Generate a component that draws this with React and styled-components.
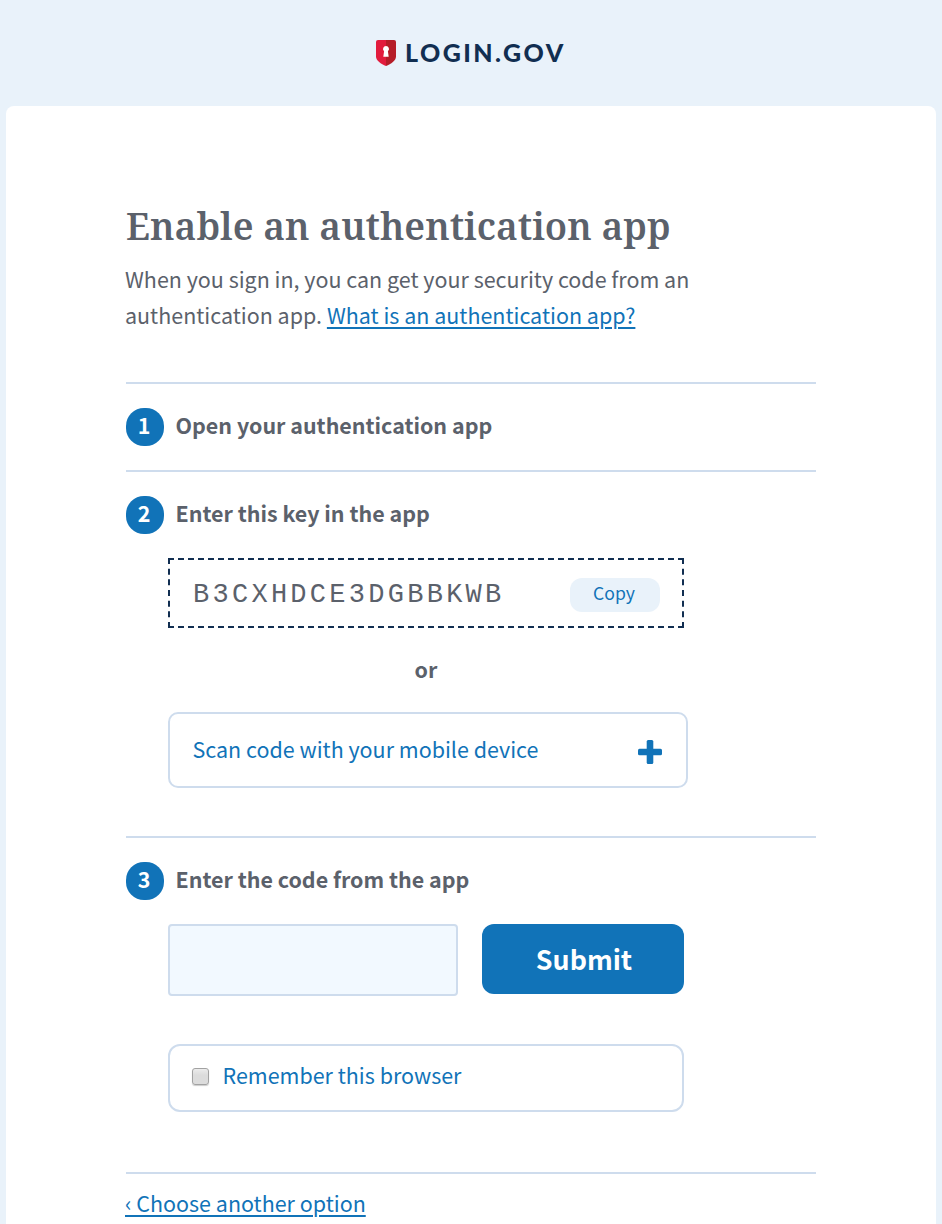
import React from "react";
import styled, { createGlobalStyle } from "styled-components";

const blue = "#1173b8";
const navy = "#112e51";
const gray = "#5b616b";
const rule = "#cedced";
const pale = "#e9f2fa";
const sans = '"Noto Sans CJK SC", "Open Sans", sans-serif';

const GlobalStyle = createGlobalStyle`
  *, *::before, *::after { box-sizing: border-box; }
  html, body { margin: 0; padding: 0; }
  body {
    background: ${pale};
    color: ${gray};
    font: 400 21.48px/36px ${sans};
  }
`;

const Page = styled.div`
  height: 1224px;
  display: flex;
  flex-direction: column;
  overflow: hidden;
`;

const Header = styled.header`
  flex: none;
  height: 106px;
  padding: 40px 0 0 376px;
  display: flex;
  align-items: flex-start;
`;

const Shield = styled.svg`
  display: block;
  width: 20px;
  height: 26px;
  margin-right: 9px;
`;

const Wordmark = styled.span`
  font: 900 25px/24px Lato, sans-serif;
  letter-spacing: 2.45px;
  color: ${navy};
`;

const Card = styled.main`
  flex: 1;
  margin: 0 6px;
  padding: 93px 120px 0;
  background: #fff;
  border-radius: 8px 8px 0 0;
`;

const Title = styled.h1`
  margin: 0;
  height: 62px;
  font: 600 37.3px/54px "Noto Serif", "DejaVu Serif Condensed", serif;
  white-space: nowrap;
`;

const Intro = styled.p`
  margin: 0 0 0 -1px;
  height: 121px;
  white-space: nowrap;
`;

const Link = styled.a`
  color: ${blue};
  text-decoration: underline;
  text-decoration-thickness: 2px;
  text-underline-offset: 3px;
`;

const Section = styled.section`
  height: ${(p) => p.$height}px;
  padding-top: 24px;
  border-top: 2px solid ${rule};
`;

const StepHead = styled.h2`
  margin: 0 0 24px;
  display: flex;
  gap: 11.5px;
  height: 38px;
  font: 700 21.45px/33px ${sans};
`;

const StepNumber = styled.span`
  width: 38px;
  height: 38px;
  padding-right: 2px;
  border-radius: 18px;
  background: ${blue};
  color: #fff;
  text-align: center;
`;

const StepBody = styled.div`
  margin-left: 42px;
  width: 516px;
`;

const KeyBox = styled.div`
  display: flex;
  align-items: center;
  justify-content: space-between;
  height: 70px;
  padding: 2px 22px 0 23px;
  border: 2px dashed ${navy};
`;

const Key = styled.code`
  padding-top: 2px;
  font: 400 27px/36px "Liberation Mono", monospace;
  letter-spacing: 3.27px;
`;

const CopyButton = styled.button`
  width: 90px;
  height: 34px;
  margin-top: 2px;
  padding: 0 2px 4px 0;
  border: 0;
  border-radius: 12px;
  background: ${pale};
  color: ${blue};
  font: 400 17.6px/30px ${sans};
`;

const Or = styled.div`
  height: 84px;
  font-weight: 700;
  line-height: 82px;
  text-align: center;
`;

const ScanRow = styled.div`
  display: flex;
  align-items: center;
  justify-content: space-between;
  width: 520px;
  height: 76px;
  padding: 0 24px 2px 22.5px;
  border: 2px solid ${rule};
  border-radius: 10px;
  color: ${blue};
`;

const Plus = styled.svg`
  display: block;
  width: 24px;
  height: 24px;
  margin-top: 5px;
`;

const CodeRow = styled.div`
  display: flex;
  gap: 24px;
  height: 120px;
`;

const CodeInput = styled.input`
  width: 290px;
  height: 72px;
  padding: 0 16px;
  border: 2px solid ${rule};
  border-radius: 4px;
  background: #f2f9ff;
  font: inherit;
`;

const Submit = styled.button`
  width: 202px;
  height: 70px;
  padding: 0 0 0 2px;
  border: 0;
  border-radius: 12px;
  background: ${blue};
  color: #fff;
  font: 700 26.8px/70px ${sans};
`;

const Remember = styled.label`
  display: flex;
  align-items: center;
  gap: 13.5px;
  height: 68px;
  padding: 0 22px 6px;
  border: 2px solid ${rule};
  border-radius: 12px;
  color: ${blue};
`;

const Checkbox = styled.input`
  appearance: none;
  width: 17px;
  height: 17px;
  margin: 2px 0 0;
  border: 1px solid #a2a2a2;
  border-radius: 3px;
  background: linear-gradient(#ececec, #dcdcdc 40%);
  box-shadow: 0 1px 1px rgba(0, 0, 0, 0.2);
`;

const Footer = styled.footer`
  height: 60px;
  padding-top: 11px;
  border-top: 2px solid ${rule};
`;

const FooterLink = styled(Link)`
  margin-left: -1px;
`;

function Step({ number, title, height, children }) {
  return (
    <Section $height={height}>
      <StepHead>
        <StepNumber>{number}</StepNumber>
        {title}
      </StepHead>
      {children && <StepBody>{children}</StepBody>}
    </Section>
  );
}

export default function App() {
  return (
    <Page>
      <GlobalStyle />
      <Header>
        <Shield viewBox="0 0 20 26" aria-hidden="true">
          <path d="M2 0H10V26C5 24 0 20.5 0 16.500V2Q0 0 2 0Z" fill="#e21c3d" />
          <path d="M10 0H18Q20 0 20 2V16.500C20 20.500 15 24 10 26Z" fill="#b51d28" />
          <path d="M10 6a3 3 0 0 1 1.900 5.300L12.700 16.800H7.300L8.100 11.300A3 3 0 0 1 10 6Z" fill="#fff" />
        </Shield>
        <Wordmark>LOGIN.GOV</Wordmark>
      </Header>
      <Card>
        <Title>Enable an authentication app</Title>
        <Intro>
          When you sign in, you can get your security code from an
          <br />
          authentication app. <Link>What is an authentication app?</Link>
        </Intro>
        <Step number={1} title="Open your authentication app" height={88} />
        <Step number={2} title="Enter this key in the app" height={366}>
          <KeyBox>
            <Key>B3CXHDCE3DGBBKWB</Key>
            <CopyButton>Copy</CopyButton>
          </KeyBox>
          <Or>or</Or>
          <ScanRow>
            Scan code with your mobile device
            <Plus viewBox="0 0 24 24" aria-hidden="true">
              <rect x="0" y="8.700" width="24" height="6.600" rx="1.500" fill={blue} />
              <rect x="8.700" y="0" width="6.600" height="24" rx="1.500" fill={blue} />
            </Plus>
          </ScanRow>
        </Step>
        <Step number={3} title="Enter the code from the app" height={336}>
          <CodeRow>
            <CodeInput type="text" aria-label="Code" />
            <Submit>Submit</Submit>
          </CodeRow>
          <Remember>
            <Checkbox type="checkbox" />
            Remember this browser
          </Remember>
        </Step>
        <Footer>
          <FooterLink>‹ Choose another option</FooterLink>
        </Footer>
      </Card>
    </Page>
  );
}
